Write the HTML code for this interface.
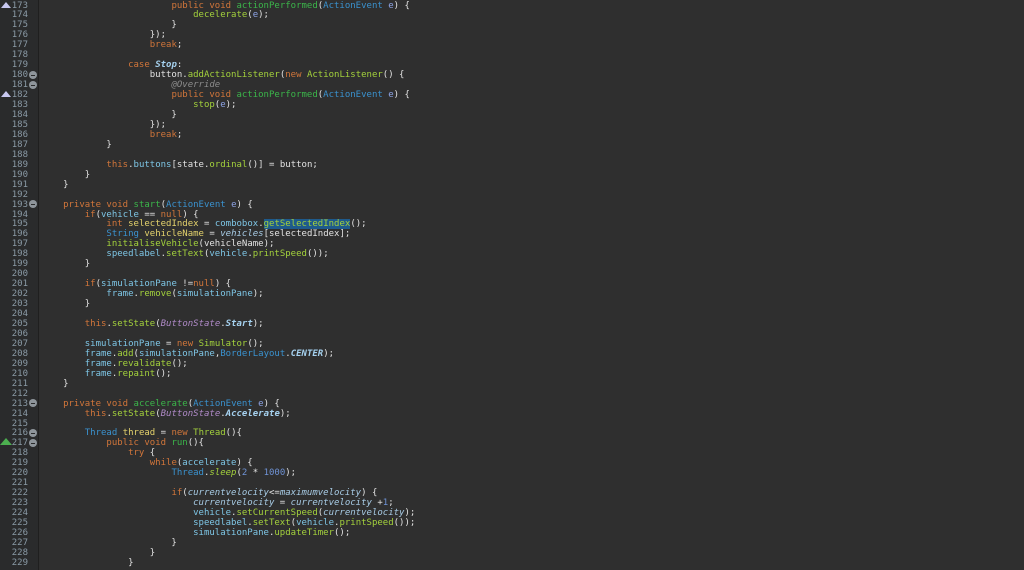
<!DOCTYPE html>
<html><head><meta charset="utf-8"><style>
html,body{margin:0;padding:0;background:#2f2f2f;width:1024px;height:570px;overflow:hidden}
#g{position:absolute;left:0;top:0;width:38px;height:570px;background:#2a2b2c;border-right:1px solid #1f1f1f}
#code{position:absolute;left:41.4px;top:1.5px;font:9px/9.95px "DejaVu Sans Mono","Liberation Mono",monospace;color:#e2e2e2;white-space:pre}
#nums{position:absolute;left:0;top:1.5px;width:28px;text-align:right;font:9px/9.95px "DejaVu Sans Mono","Liberation Mono",monospace;color:#8a9aa6;white-space:pre}
.k{color:#d2763a}.m{color:#a3d13c}.d{color:#3bb54a}.t{color:#3a92cf}.f{color:#7ec6e6}
.fi{color:#a8cce6;font-style:italic}.v{color:#e4d26c}.p{color:#8ea4e6}.a{color:#8c8c8c;font-style:italic}
.s{color:#a6d2f0;font-style:italic;font-weight:bold}.c{color:#b08ac8;font-style:italic}.n{color:#6f93d6}
.hl{background:#1e5a8c}
.fold{position:absolute;left:29px;width:8px;height:8px;border-radius:50%;background:#8e959b}
.fold:after{content:"";position:absolute;left:2px;top:3.5px;width:4px;height:1px;background:#2a2b2c}
.tri{position:absolute;left:1px;width:0;height:0;border-left:5px solid transparent;border-right:5px solid transparent;border-bottom:6px solid #c8c8f0}
</style></head><body>
<div id="g"></div>
<div id="nums">173
174
175
176
177
178
179
180
181
182
183
184
185
186
187
188
189
190
191
192
193
194
195
196
197
198
199
200
201
202
203
204
205
206
207
208
209
210
211
212
213
214
215
216
217
218
219
220
221
222
223
224
225
226
227
228
229</div>
<div class="tri" style="top:2px"></div>
<div class="tri" style="top:91px"></div>
<div class="tri" style="top:438px;border-bottom-color:#4caf50;left:0px;border-left-width:6px;border-right-width:6px;border-bottom-width:7px"></div>
<div class="fold" style="top:71px"></div>
<div class="fold" style="top:81px"></div>
<div class="fold" style="top:200px"></div>
<div class="fold" style="top:399px"></div>
<div class="fold" style="top:429px"></div>
<div class="fold" style="top:439px"></div>
<div id="code">                        <span class="k">public void</span> <span class="d">actionPerformed</span>(<span class="t">ActionEvent</span> <span class="p">e</span>) {
                            <span class="m">decelerate</span>(<span class="p">e</span>);
                        }
                    });
                    <span class="k">break</span>;

                <span class="k">case</span> <span class="s">Stop</span>:
                    button.<span class="m">addActionListener</span>(<span class="k">new</span> <span class="m">ActionListener</span>() {
                        <span class="a">@Override</span>
                        <span class="k">public void</span> <span class="d">actionPerformed</span>(<span class="t">ActionEvent</span> <span class="p">e</span>) {
                            <span class="m">stop</span>(<span class="p">e</span>);
                        }
                    });
                    <span class="k">break</span>;
            }

            <span class="k">this</span>.<span class="f">buttons</span>[state.<span class="m">ordinal</span>()] = button;
        }
    }

    <span class="k">private void</span> <span class="d">start</span>(<span class="t">ActionEvent</span> <span class="p">e</span>) {
        <span class="k">if</span>(<span class="f">vehicle</span> == <span class="k">null</span>) {
            <span class="k">int</span> <span class="v">selectedIndex</span> = <span class="f">combobox</span>.<span class="m hl">getSelectedIndex</span>();
            <span class="t">String</span> <span class="v">vehicleName</span> = <span class="fi">vehicles</span>[selectedIndex];
            <span class="m">initialiseVehicle</span>(vehicleName);
            <span class="f">speedlabel</span>.<span class="m">setText</span>(<span class="f">vehicle</span>.<span class="m">printSpeed</span>());
        }

        <span class="k">if</span>(<span class="f">simulationPane</span> !=<span class="k">null</span>) {
            <span class="f">frame</span>.<span class="m">remove</span>(<span class="f">simulationPane</span>);
        }

        <span class="k">this</span>.<span class="m">setState</span>(<span class="c">ButtonState</span>.<span class="s">Start</span>);

        <span class="f">simulationPane</span> = <span class="k">new</span> <span class="m">Simulator</span>();
        <span class="f">frame</span>.<span class="m">add</span>(<span class="f">simulationPane</span>,<span class="t">BorderLayout</span>.<span class="s">CENTER</span>);
        <span class="f">frame</span>.<span class="m">revalidate</span>();
        <span class="f">frame</span>.<span class="m">repaint</span>();
    }

    <span class="k">private void</span> <span class="d">accelerate</span>(<span class="t">ActionEvent</span> <span class="p">e</span>) {
        <span class="k">this</span>.<span class="m">setState</span>(<span class="c">ButtonState</span>.<span class="s">Accelerate</span>);

        <span class="t">Thread</span> <span class="v">thread</span> = <span class="k">new</span> <span class="m">Thread</span>(){
            <span class="k">public void</span> <span class="d">run</span>(){
                <span class="k">try</span> {
                    <span class="k">while</span>(<span class="f">accelerate</span>) {
                        <span class="t">Thread</span>.<span class="m" style="font-style:italic">sleep</span>(<span class="n">2</span> * <span class="n">1000</span>);

                        <span class="k">if</span>(<span class="fi">currentvelocity</span>&lt;=<span class="fi">maximumvelocity</span>) {
                            <span class="fi">currentvelocity</span> = <span class="fi">currentvelocity</span> +<span class="n">1</span>;
                            <span class="f">vehicle</span>.<span class="m">setCurrentSpeed</span>(<span class="fi">currentvelocity</span>);
                            <span class="f">speedlabel</span>.<span class="m">setText</span>(<span class="f">vehicle</span>.<span class="m">printSpeed</span>());
                            <span class="f">simulationPane</span>.<span class="m">updateTimer</span>();
                        }
                    }
                }</div>
</body></html>
